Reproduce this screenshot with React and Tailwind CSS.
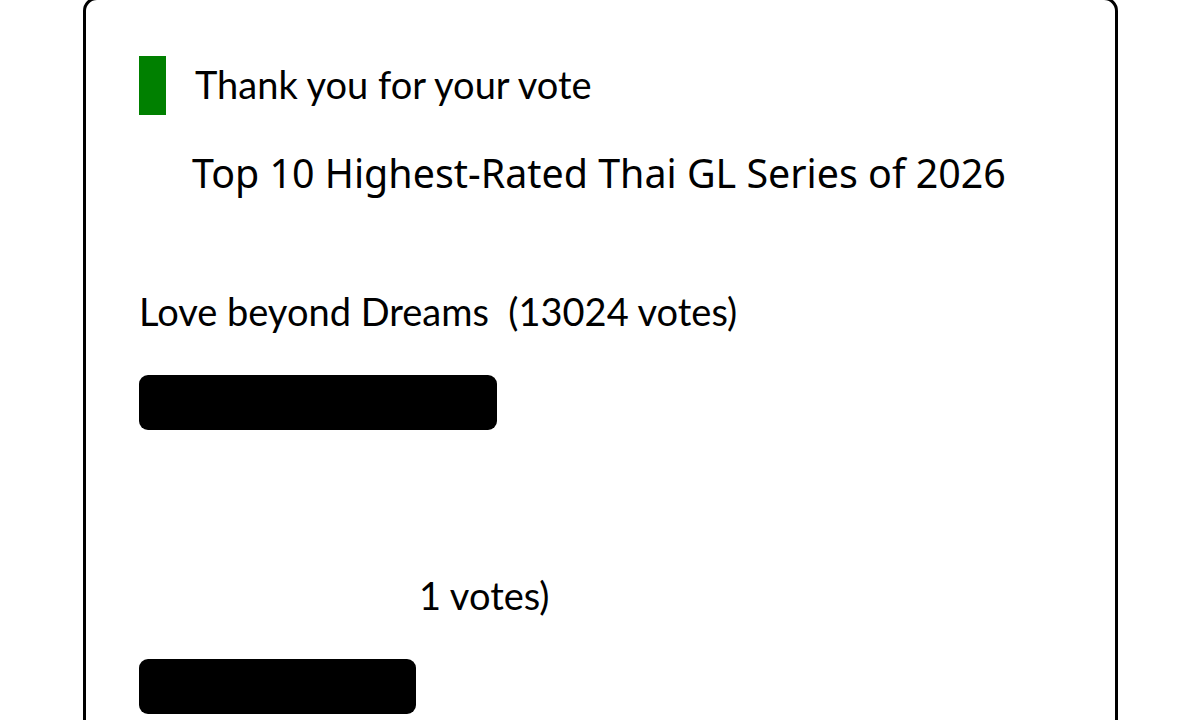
import React from 'react';

const results = [
  { id: 1, title: 'Love beyond Dreams', votes: '13024', width: 358 },
  { id: 2, title: '', votes: '', width: 277, masked: true },
];

const ResultRow = ({ item }) => (
  <div className="mb-[141px]">
    {item.masked ? (
      <p className="text-[38px] leading-[48px] text-black">
        <span className="inline-block w-[280px]" />
        <span>1 votes)</span>
      </p>
    ) : (
      <p className="text-[38px] leading-[48px] text-black">
        {item.title}&nbsp;&nbsp;({item.votes} votes)
      </p>
    )}
    <div className="mt-[40px] h-[55px] rounded-[9px] bg-black" style={{ width: item.width }} />
  </div>
);

export default function App() {
  return (
    <div className="h-[720px] bg-white overflow-hidden" style={{ fontFamily: 'Lato, "Noto Sans", sans-serif' }}>
      <div className="ml-[83px] mt-[-3px] w-[1035px] min-h-[760px] rounded-[14px] border-[3px] border-black pl-[53px] pt-[56px]">
        <div className="flex items-center gap-[29px]">
          <div className="h-[59px] w-[27px] bg-[#008000]" />
          <h2 className="mb-[4px] text-[38px] leading-[48px] text-black">Thank you for your vote</h2>
        </div>
        <h1
          className="ml-[53px] mt-[30px] text-[39.4px] leading-[56px] text-black"
          style={{ fontFamily: '"Noto Sans", sans-serif' }}
        >
          Top 10 Highest-Rated Thai GL Series of 2026
        </h1>
        <div className="mt-[86px]">
          {results.map(item => (
            <ResultRow key={item.id} item={item} />
          ))}
        </div>
      </div>
    </div>
  );
}
